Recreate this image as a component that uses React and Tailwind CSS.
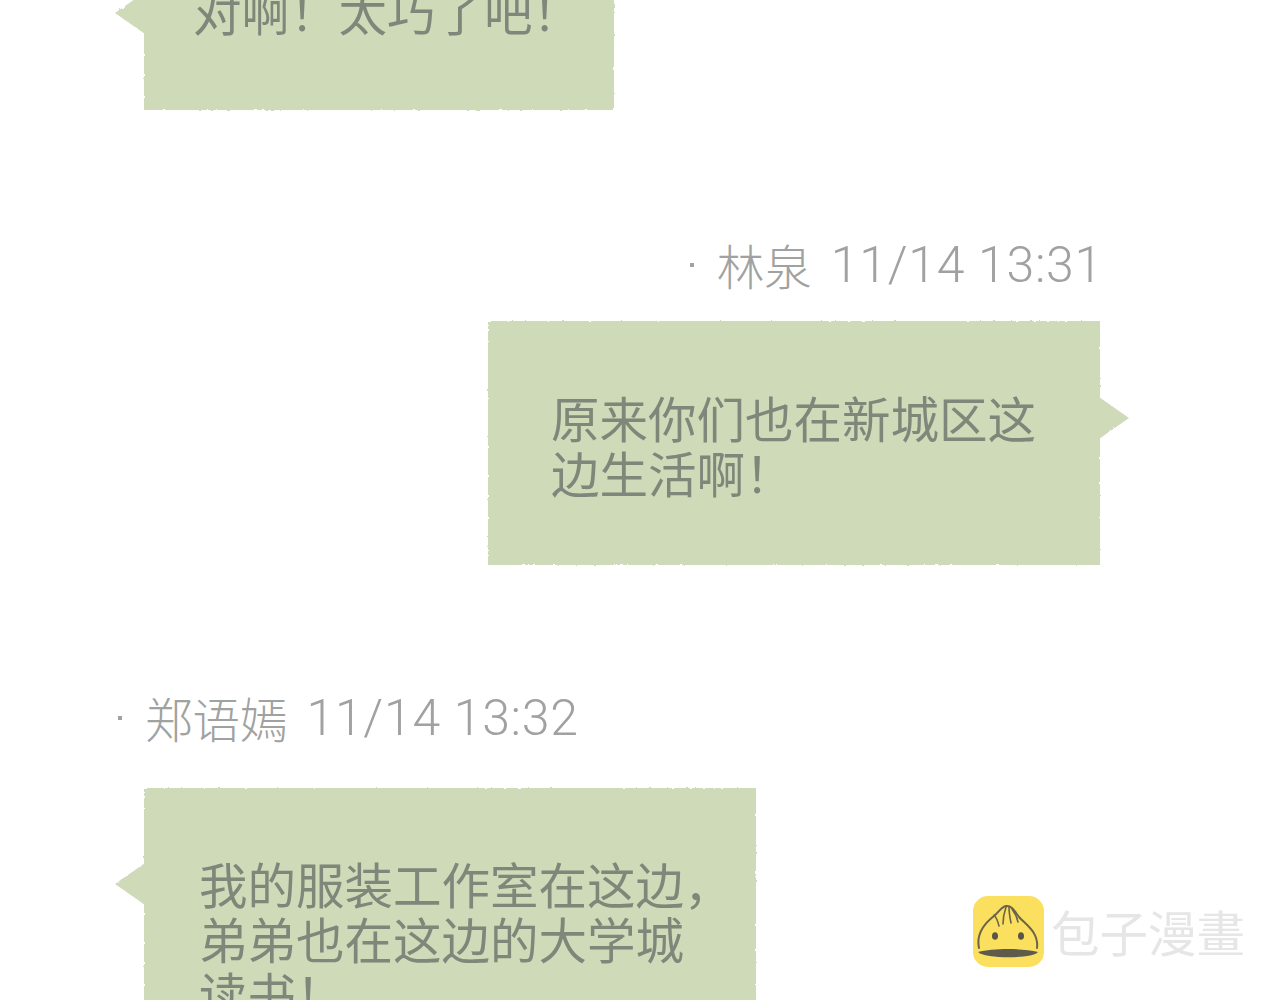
import React from 'react';

const cjk = "font-['Noto_Sans_CJK_SC','Liberation_Sans',sans-serif]";

// papel rasgado: el filtro solo se aplica al fondo, no al texto
const RoughFilter = () => (
  <svg className="absolute w-0 h-0" aria-hidden="true">
    <filter id="rough" x="-5%" y="-5%" width="110%" height="110%">
      <feTurbulence type="fractalNoise" baseFrequency="0.22" numOctaves="2" seed="9" />
      <feDisplacementMap in="SourceGraphic" scale="2.5" />
    </filter>
  </svg>
);

const Bubble = ({ side, className, textClass, arrowY, lines }) => (
  <div className={`relative ${className}`}>
    <div className="absolute inset-0 [filter:url(#rough)]">
      <div className="w-full h-full bg-[#cfdab8]" />
      {side === 'left' ? (
        <svg className="absolute -left-[29px]" style={{ top: arrowY - 21 }} width="30" height="42" viewBox="0 0 30 42">
          <path d="M30 0 L0 21 L30 42 Z" fill="#cfdab8" />
        </svg>
      ) : (
        <svg className="absolute -right-[29px]" style={{ top: arrowY - 21 }} width="30" height="42" viewBox="0 0 30 42">
          <path d="M0 0 L30 21 L0 42 Z" fill="#cfdab8" />
        </svg>
      )}
    </div>
    <div className={`relative ${cjk} font-normal text-[48.5px] leading-[55px] text-[#7f877b] ${textClass}`}>
      {lines.map((line) => (
        <div key={line} className="whitespace-nowrap">{line}</div>
      ))}
    </div>
  </div>
);

const Header = ({ name, time, className }) => (
  <div className={`flex items-center h-[56px] text-[#a0a2a0] ${className}`}>
    <span className="w-[4px] h-[4px] bg-[#a0a2a0] mr-[23px]" />
    <span className={`${cjk} font-light text-[47.5px] leading-[56px] whitespace-nowrap`}>{name}</span>
    <span className="font-['Roboto',sans-serif] font-light text-[50px] tracking-[0.7px] leading-[56px] ml-[19px] whitespace-nowrap">{time}</span>
  </div>
);

const Logo = () => (
  <svg width="71" height="71" viewBox="0 0 71 71" aria-hidden="true">
    <rect width="71" height="71" rx="15" fill="#fbdf5f" />
    <path d="M6 52 C3 38 12 27 21 20 C26 16 28 11 33 10 C38 9 41 14 46 21 C52 28 66 36 64 52" fill="none" stroke="#6a6449" strokeWidth="2" strokeLinecap="round" />
    <path d="M21 19 C24 22 25 26 26 30 M33 11 C31 17 30 22 30 28 M36 11 C36 17 37 22 38 27 M39 13 C42 17 44 21 45 26" fill="none" stroke="#6a6449" strokeWidth="1.6" strokeLinecap="round" />
    <ellipse cx="22" cy="40" rx="3" ry="3.8" fill="#5a5546" />
    <ellipse cx="48" cy="40" rx="3" ry="3.8" fill="#5a5546" />
    <path d="M5 56 C20 52 50 52 65 56 C60 63 12 63 5 56 Z" fill="#5e5a4c" />
  </svg>
);

const App = () => {
  return (
    <div className="relative h-[1000px] overflow-hidden bg-white flex flex-col">
      <RoughFilter />

      <Bubble
        side="left"
        className="w-[470px] h-[210px] -mt-[100px] ml-[144px] shrink-0"
        textClass="pl-[49px] pt-[83px]"
        arrowY={113}
        lines={['对啊！太巧了吧！']}
      />

      <Header name="林泉" time="11/14 13:31" className="self-end mr-[177px] mt-[127px]" />

      <Bubble
        side="right"
        className="w-[612px] h-[244px] mt-[28px] ml-[488px] shrink-0"
        textClass="pl-[63px] pt-[69px]"
        arrowY={97}
        lines={['原来你们也在新城区这', '边生活啊！']}
      />

      <Header name="郑语嫣" time="11/14 13:32" className="ml-[118px] mt-[125px]" />

      <Bubble
        side="left"
        className="w-[612px] h-[260px] mt-[42px] ml-[144px] shrink-0"
        textClass="pl-[55px] pt-[68px]"
        arrowY={96}
        lines={['我的服装工作室在这边，', '弟弟也在这边的大学城', '读书！']}
      />

      <div className="absolute left-[973px] top-[895px] flex items-center gap-[7px]">
        <Logo />
        <span className="font-['Noto_Sans_CJK_TC',sans-serif] font-normal text-[48.5px] leading-[72px] text-[#e6e6e6] whitespace-nowrap">包子漫畫</span>
      </div>
    </div>
  );
};

export default App;
